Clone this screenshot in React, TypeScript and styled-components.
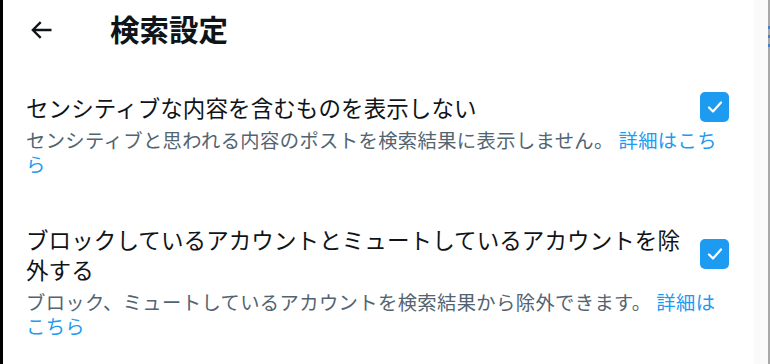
import React from 'react';
import styled, { createGlobalStyle } from 'styled-components';

const GlobalStyle = createGlobalStyle`
  html, body {
    margin: 0;
    padding: 0;
    background: #ffffff;
  }
  body {
    font-family: "Noto Sans CJK JP", "Noto Sans", sans-serif;
    color: #0f1419;
  }
`;

const Frame = styled.div`
  display: flex;
  width: 770px;
  height: 364px;
  overflow: hidden;
  box-sizing: border-box;
  border-left: 3px solid #000000;
`;

const Main = styled.main`
  flex: 1;
  display: flex;
  flex-direction: column;
  min-width: 0;
`;

const ScrollTrack = styled.div`
  width: 14px;
  background: #fafafa;
  border-right: 2px solid #a8a8a8;
  position: relative;
`;

const TrackMark = styled.span<{ $top: number }>`
  position: absolute;
  right: -2px;
  top: ${p => p.$top}px;
  width: 2px;
  height: 3px;
  background: #4a7cc4;
`;

const Header = styled.header`
  height: 56px;
  display: flex;
  align-items: center;
  padding-left: 23px;
`;

const BackButton = styled.button`
  width: 30px;
  height: 30px;
  padding: 0;
  border: none;
  background: none;
  display: flex;
  align-items: center;
  justify-content: center;
  color: #0f1419;
  cursor: pointer;
  margin-top: 3px;
`;

const Title = styled.h2`
  margin: 0 0 0 54px;
  font-size: 29.5px;
  line-height: 36px;
  font-weight: 700;
  color: #0f1419;
`;

const List = styled.div`
  display: flex;
  flex-direction: column;
  padding-top: 12px;
`;

const Item = styled.section`
  padding: 24px 25px 24px 23px;
`;

const LabelRow = styled.label`
  display: flex;
  align-items: center;
  gap: 10px;
  cursor: pointer;
`;

const LabelText = styled.span`
  flex: 1;
  font-size: 22.5px;
  line-height: 30px;
  letter-spacing: 0.1px;
  color: #0f1419;
`;

const Box = styled.span`
  flex: none;
  width: 29px;
  height: 30px;
  border-radius: 5px;
  background: #1d9bf0;
  display: flex;
  align-items: center;
  justify-content: center;
`;

const Description = styled.p`
  margin: 6px 0 0;
  font-size: 19.3px;
  line-height: 24px;
  letter-spacing: 0.4px;
  color: #536471;
`;

const Link = styled.a`
  color: #1d9bf0;
  text-decoration: none;
`;

const ArrowIcon = () => (
  <svg width="28" height="28" viewBox="0 0 24 24" aria-hidden="true">
    <path
      fill="currentColor"
      d="M7.414 13l5.043 5.04-1.414 1.42L3.586 12l7.457-7.46 1.414 1.42L7.414 11H21v2H7.414z"
    />
  </svg>
);

const CheckIcon = () => (
  <svg width="18" height="18" viewBox="0 0 18 18" aria-hidden="true">
    <polyline
      points="3,9.5 7,13.5 15,4.5"
      fill="none"
      stroke="#ffffff"
      strokeWidth="2.2"
      strokeLinecap="round"
      strokeLinejoin="round"
    />
  </svg>
);

interface SettingProps {
  label: string;
  description: string;
}

const Setting: React.FC<SettingProps> = ({ label, description }) => (
  <Item>
    <LabelRow>
      <LabelText>{label}</LabelText>
      <Box>
        <CheckIcon />
      </Box>
    </LabelRow>
    <Description>
      {description} <Link href="#">詳細はこちら</Link>
    </Description>
  </Item>
);

export default function App() {
  return (
    <>
      <GlobalStyle />
      <Frame>
        <Main>
          <Header>
            <BackButton aria-label="戻る">
              <ArrowIcon />
            </BackButton>
            <Title>検索設定</Title>
          </Header>
          <List>
            <Setting
              label="センシティブな内容を含むものを表示しない"
              description="センシティブと思われる内容のポストを検索結果に表示しません。"
            />
            <Setting
              label="ブロックしているアカウントとミュートしているアカウントを除外する"
              description="ブロック、ミュートしているアカウントを検索結果から除外できます。"
            />
          </List>
        </Main>
        <ScrollTrack>
          <TrackMark $top={26} />
          <TrackMark $top={35} />
          <TrackMark $top={44} />
        </ScrollTrack>
      </Frame>
    </>
  );
}
